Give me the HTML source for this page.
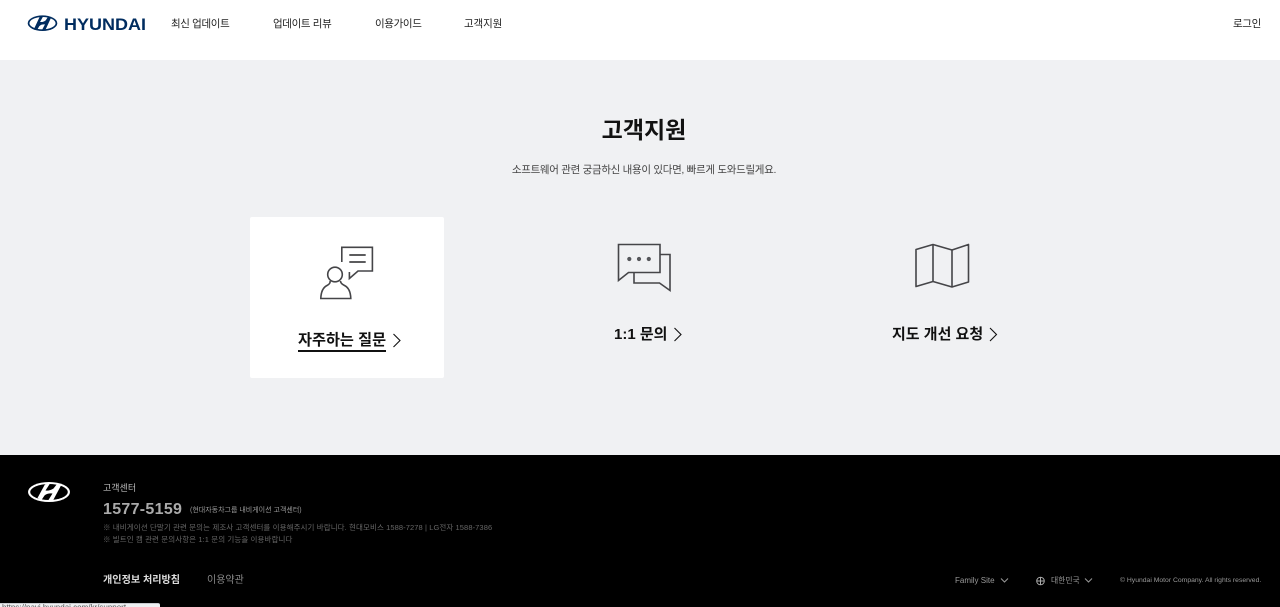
<!DOCTYPE html>
<html lang="ko">
<head>
<meta charset="utf-8">
<title>고객지원</title>
<style>
html,body{margin:0;padding:0;width:1280px;height:607px;overflow:hidden;background:#f0f1f3;font-family:"Liberation Sans","Noto Sans CJK KR",sans-serif;}
.t{position:absolute;white-space:nowrap;line-height:1;}
svg{position:absolute;overflow:visible;}
#hd{position:absolute;left:0;top:0;width:1280px;height:60px;background:#fff;}
#ft{position:absolute;left:0;top:455px;width:1280px;height:152px;background:#000;}
.nav{font-size:10.5px;color:#222;top:18.5px;letter-spacing:-.35px;}
.lbl{font-size:15.2px;font-weight:700;color:#111;}
</style>
</head>
<body>
<div id="hd"></div>
<svg style="left:27px;top:15px" width="120" height="18" viewBox="0 0 120 18">
  <g transform="scale(.705 .82)">
    <ellipse cx="22" cy="10" rx="21" ry="9.500" fill="#002c5f"/>
    <ellipse cx="22" cy="10" rx="18.500" ry="7.500" fill="#fff"/>
    <path d="M10.500 16L18 2.200L23 1.500L18.500 8.500Q23 9 26.500 6.500L30 2L34 3.500L26 18.500L21 18.800L25.500 11.500Q20.500 11 17.500 13.500L14.500 18Z" fill="#002c5f"/>
  </g>
  <text x="37" y="15" font-family="Liberation Sans" font-weight="700" font-size="17" fill="#002c5f" textLength="82" lengthAdjust="spacingAndGlyphs">HYUNDAI</text>
</svg>
<div class="t nav" style="left:171px">최신 업데이트</div>
<div class="t nav" style="left:273px">업데이트 리뷰</div>
<div class="t nav" style="left:375px">이용가이드</div>
<div class="t nav" style="left:464px;letter-spacing:-.1px">고객지원</div>
<div class="t nav" style="left:1233px">로그인</div>

<div class="t" style="left:0;width:1288px;text-align:center;top:118.500px;font-size:23px;font-weight:700;color:#111">고객지원</div>
<div class="t" style="left:0;width:1288px;text-align:center;top:165px;font-size:10.500px;letter-spacing:-.3px;color:#444">소프트웨어 관련 궁금하신 내용이 있다면, 빠르게 도와드릴게요.</div>

<div style="position:absolute;left:250px;top:217px;width:194px;height:161px;background:#fff;border-radius:2px"></div>

<svg style="left:0;top:0" width="1280" height="400" viewBox="0 0 1280 400" fill="none" stroke="#454548" stroke-width="1.600">
  <!-- person + bubble -->
  <path d="M341.800 262V247.300H372.400V271H358L349.400 278.500V272"/>
  <path d="M349.300 255H365.700M349.300 262H365.700" stroke-width="1.800"/>
  <circle cx="335" cy="274.500" r="7.300"/>
  <path d="M330 281C330.500 283 329 284.500 327 285.500C323 287.500 321 292 320.800 298.500H350.800C350.600 292 348.500 287.500 344.500 285.500C342.500 284.500 340.500 283 340.500 281"/>
  <!-- chat bubbles -->
  <path d="M618.500 280.500V244.500H660V272.500H628.500Z"/>
  <path d="M660 254.500H670V290.500L659.500 283H634V272.500"/>
  <g fill="#55565a" stroke="none"><circle cx="629.300" cy="259" r="2.100"/><circle cx="639" cy="259" r="2.100"/><circle cx="648.800" cy="259" r="2.100"/></g>
  <!-- map -->
  <path d="M916 249.500L933 244.500L952 250L968.500 244.500V282L952 287L933 281.500L916 286.500Z" stroke-linejoin="round"/>
  <path d="M933 244.500V281.500M952 250V287"/>
  <!-- chevrons -->
  <g stroke="#111" stroke-width="1.100">
    <path d="M393.500 334L400 340.500L393.500 347"/>
    <path d="M674.500 328L681 334.500L674.500 341"/>
    <path d="M990 328L996.500 334.500L990 341"/>
  </g>
</svg>

<div class="t lbl" style="left:298px;top:332.500px;border-bottom:2px solid #111;padding-bottom:2px;height:15px">자주하는 질문</div>
<div class="t lbl" style="left:614px;top:327px;font-size:15px">1:1 문의</div>
<div class="t lbl" style="left:892px;top:327px;font-size:15px">지도 개선 요청</div>

<div id="ft"></div>
<svg style="left:27px;top:482px" width="44" height="20" viewBox="0 0 44 20">
  <ellipse cx="22" cy="10" rx="21" ry="10" fill="#fff"/>
  <ellipse cx="22" cy="10" rx="18.800" ry="8" fill="#000"/>
  <path d="M10.500 16L18 2.200L23 1.500L18.500 8.500Q23 9 26.500 6.500L30 2L34 3.500L26 18.500L21 18.800L25.500 11.500Q20.500 11 17.500 13.500L14.500 18Z" fill="#fff"/>
</svg>
<div class="t" style="left:103px;top:483.500px;font-size:9px;color:#bbb">고객센터</div>
<div class="t" style="left:103px;top:502px;font-size:16px;font-weight:700;color:#aaa;letter-spacing:.3px">1577-5159</div>
<div class="t" style="left:190px;top:506.500px;font-size:7px;color:#999">(현대자동차그룹 내비게이션 고객센터)</div>
<div class="t" style="left:103px;top:523.500px;font-size:7.500px;color:#666;letter-spacing:.09px">※ 내비게이션 단말기 관련 문의는 제조사 고객센터를 이용해주시기 바랍니다. 현대모비스 1588-7278 | LG전자 1588-7386</div>
<div class="t" style="left:103px;top:535.500px;font-size:7.500px;color:#666;letter-spacing:.09px">※ 빌트인 캠 관련 문의사항은 1:1 문의 기능을 이용바랍니다</div>
<div class="t" style="left:103px;top:576px;font-size:10.100px;font-weight:700;color:#ddd">개인정보 처리방침</div>
<div class="t" style="left:207px;top:576px;font-size:10px;color:#888">이용약관</div>
<div class="t" style="left:955px;top:576.500px;font-size:8px;color:#999">Family Site</div>
<svg style="left:0;top:0" width="1280" height="607" viewBox="0 0 1280 607" fill="none" stroke="#999" stroke-width="1">
  <path d="M1001 578.500L1004.500 582L1008 578.500M1085 578.500L1088.500 582L1092 578.500"/>
  <circle cx="1040.500" cy="581" r="3.800" stroke="#aaa"/>
  <path d="M1036.500 581H1044.500M1040.500 577V585" stroke="#aaa"/>
</svg>
<div class="t" style="left:1051px;top:576.500px;font-size:7.800px;color:#999">대한민국</div>
<div class="t" style="left:1120px;top:577.500px;font-size:6.800px;color:#999">© Hyundai Motor Company. All rights reserved.</div>
<div style="position:absolute;left:0;top:603px;width:160px;height:4px;background:#eef0f2;border-top:1px solid #c9ccd0;border-top-right-radius:2px;box-sizing:border-box;overflow:hidden"><span class="t" style="left:2px;top:0;font-size:8px;color:#555">https://navi.hyundai.com/kr/support</span></div>
</body>
</html>
